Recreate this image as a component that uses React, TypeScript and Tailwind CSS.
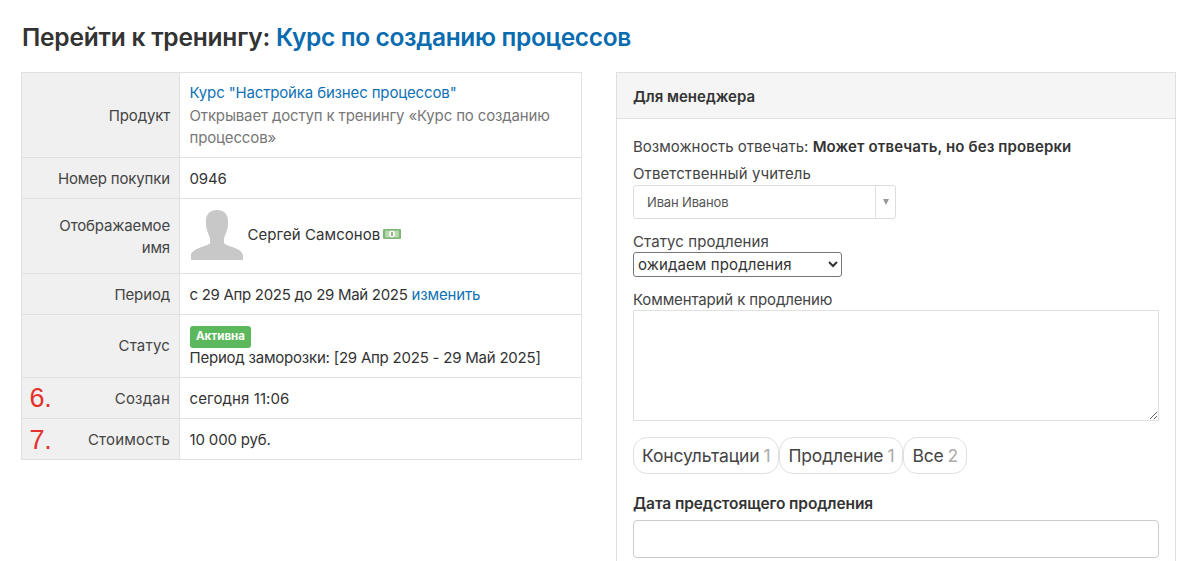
const font = "font-['Inter','Noto_Sans',sans-serif]";

function Label({ children, flat }: { children: React.ReactNode; flat?: boolean }) {
  return (
    <td
      className={`w-[158px] bg-[#f0f0f0] border border-[#e0e0e0] pl-3 pr-[9px] text-right align-middle text-[#444] leading-[22.5px] ${
        flat ? "" : "pt-[2px]"
      }`}
    >
      {children}
    </td>
  );
}

function Cell({ children, flat }: { children: React.ReactNode; flat?: boolean }) {
  return (
    <td className={`border border-[#e0e0e0] px-[9.5px] align-middle text-[#333] leading-[22.5px] ${flat ? "" : "pt-[2px]"}`}>
      {children}
    </td>
  );
}

function Mark({ children, low }: { children: React.ReactNode; low?: boolean }) {
  return (
    <span
      className={`absolute left-[8px] -translate-y-1/2 font-['Liberation_Sans',sans-serif] text-[27px] leading-none text-[#e4312b] ${
        low ? "top-[53%]" : "top-1/2"
      }`}
    >
      {children}
    </span>
  );
}

function Tab({ name, count }: { name: string; count: number }) {
  return (
    <div className="flex h-[37px] items-center rounded-[14px] border border-[#e0e0e0] px-2 pt-[2px] text-[17.5px] tracking-[-0.15px] text-[#444]">
      {name}
      <span className="ml-[4px] text-[#aaa]">{count}</span>
    </div>
  );
}

export default function App() {
  return (
    <div className={`${font} h-[561px] w-[1199px] overflow-hidden bg-white text-[15px] tracking-[-0.15px] text-[#333]`}>
      <div className="px-[22px] pt-[20px]">
        <h1 className="text-[24.5px] leading-[34px] font-semibold tracking-[-0.2px] text-[#333]">
          Перейти к тренингу: <a className="tracking-[-0.35px] text-[#0a6cb0]">Курс по созданию процессов</a>
        </h1>
      </div>

      <div className="mt-[18px] flex items-start gap-[34px] pl-[21px]">
        {/* Purchase table */}
        <table className="w-[561px] border-collapse border border-[#e0e0e0]">
          <tbody>
            <tr className="h-[85px]">
              <Label>Продукт</Label>
              <Cell>
                <a className="text-[#0f71b5]">Курс "Настройка бизнес процессов"</a>
                <div className="text-[#777]">Открывает доступ к тренингу «Курс по созданию процессов»</div>
              </Cell>
            </tr>
            <tr className="h-[41px]">
              <Label>Номер покупки</Label>
              <Cell>0946</Cell>
            </tr>
            <tr className="h-[75px]">
              <Label>Отображаемое имя</Label>
              <Cell>
                <div className="flex items-center">
                  <svg viewBox="0 0 52 50" className="mb-[4px] ml-[1px] h-[50px] w-[52px] text-[#c8c8c8]" fill="currentColor">
                    <path d="M26 0c-7 0-11 4-11 11 0 4 0 7 1 9 1 3 2 6 3 8v5c-1 2-6 3-11 5-5 2-7 4-8 6v6h52v-5c-1-3-3-5-8-7-5-2-10-3-11-5v-5c1-2 2-5 3-8 1-2 1-5 1-9 0-7-4-11-11-11z" />
                  </svg>
                  <span className="mb-[3px] ml-[5px] tracking-[0.07px]">Сергей Самсонов</span>
                  <svg viewBox="0 0 18 10" className="mb-[6px] ml-[3px] h-[10px] w-[18px]">
                    <rect width="18" height="10" rx="1" fill="#7fb377" />
                    <rect x="2" y="1.5" width="14" height="7" fill="#b5d8aa" />
                    <circle cx="9" cy="5" r="3.2" fill="#f6faf2" />
                    <rect x="8.3" y="3" width="1.4" height="4" fill="#6f9e6a" />
                  </svg>
                </div>
              </Cell>
            </tr>
            <tr className="h-[41px]">
              <Label>Период</Label>
              <Cell>
                <span className="tracking-[-0.3px]">с 29 Апр 2025 до 29 Май 2025</span>{" "}
                <a className="text-[#0f71b5]">изменить</a>
              </Cell>
            </tr>
            <tr className="h-[63px]">
              <Label flat>
                <span className="tracking-[0.2px]">Статус</span>
              </Label>
              <Cell flat>
                <span className="inline-flex h-[22px] items-center rounded-[3px] bg-[#5cb85c] px-[6.5px] text-[11.5px] font-bold tracking-normal text-white">
                  Активна
                </span>
                <div className="leading-[20px] tracking-[-0.22px]">Период заморозки: [29 Апр 2025 - 29 Май 2025]</div>
              </Cell>
            </tr>
            <tr className="relative h-[41px]">
              <Label>
                <Mark>6.</Mark>
                <span className="tracking-[0.2px]">Создан</span>
              </Label>
              <Cell>
                <span className="tracking-[0.1px]">сегодня 11:06</span>
              </Cell>
            </tr>
            <tr className="relative h-[41px]">
              <Label>
                <Mark low>7.</Mark>
                <span className="tracking-[0.2px]">Стоимость</span>
              </Label>
              <Cell>10 000 руб.</Cell>
            </tr>
          </tbody>
        </table>

        {/* Manager panel */}
        <div className="w-[560px] shrink-0 border border-[#e0e0e0] pb-5">
          <div className="flex h-[46px] items-center border-b border-[#e0e0e0] bg-[#f5f5f5] px-4 pt-[3px] text-[15px] font-semibold tracking-[0px] text-[#333]">
            Для менеджера
          </div>
          <div className="px-4 pt-[17px]">
            <div className="leading-[22px] tracking-[0px] text-[#444]">
              Возможность отвечать: <b className="font-semibold tracking-[0.12px] text-[#333]">Может отвечать, но без проверки</b>
            </div>
            <div className="mt-[5px] leading-[22px] tracking-[0.1px] text-[#444]">Ответственный учитель</div>
            <div className="flex h-[34px] w-[263px] items-center rounded-[3px] border border-[#ddd] text-[13px] text-[#555]">
              <span className="flex-1 pt-[1px] pl-[13px]">Иван Иванов</span>
              <span className="flex h-full w-[20px] items-center justify-center border-l border-[#ddd]">
                <span className="h-0 w-0 border-x-[3.5px] border-t-[6px] border-x-transparent border-t-[#999]" />
              </span>
            </div>
            <div className="mt-[12px] leading-[21px] tracking-[0.1px] text-[#444]">Статус продления</div>
            <select className="block h-[25px] w-[209px] rounded-[3px] border border-[#767676] text-[15px] tracking-[0.1px] text-[#333]">
              <option>ожидаем продления</option>
            </select>
            <div className="mt-[13px] leading-[20px] tracking-[-0.13px] text-[#444]">Комментарий к продлению</div>
            <textarea className="block h-[111px] w-[526px] border border-[#e0e0e0] outline-none" />
            <div className="mt-[16px] flex">
              <Tab name="Консультации" count={1} />
              <Tab name="Продление" count={1} />
              <Tab name="Все" count={2} />
            </div>
            <div className="mt-[19px] text-[15.5px] leading-[22px] font-semibold tracking-[-0.1px] text-[#333]">
              Дата предстоящего продления
            </div>
            <div className="mt-[5px] h-[38px] w-[526px] rounded-[4px] border border-[#ccc]" />
          </div>
        </div>
      </div>
    </div>
  );
}
